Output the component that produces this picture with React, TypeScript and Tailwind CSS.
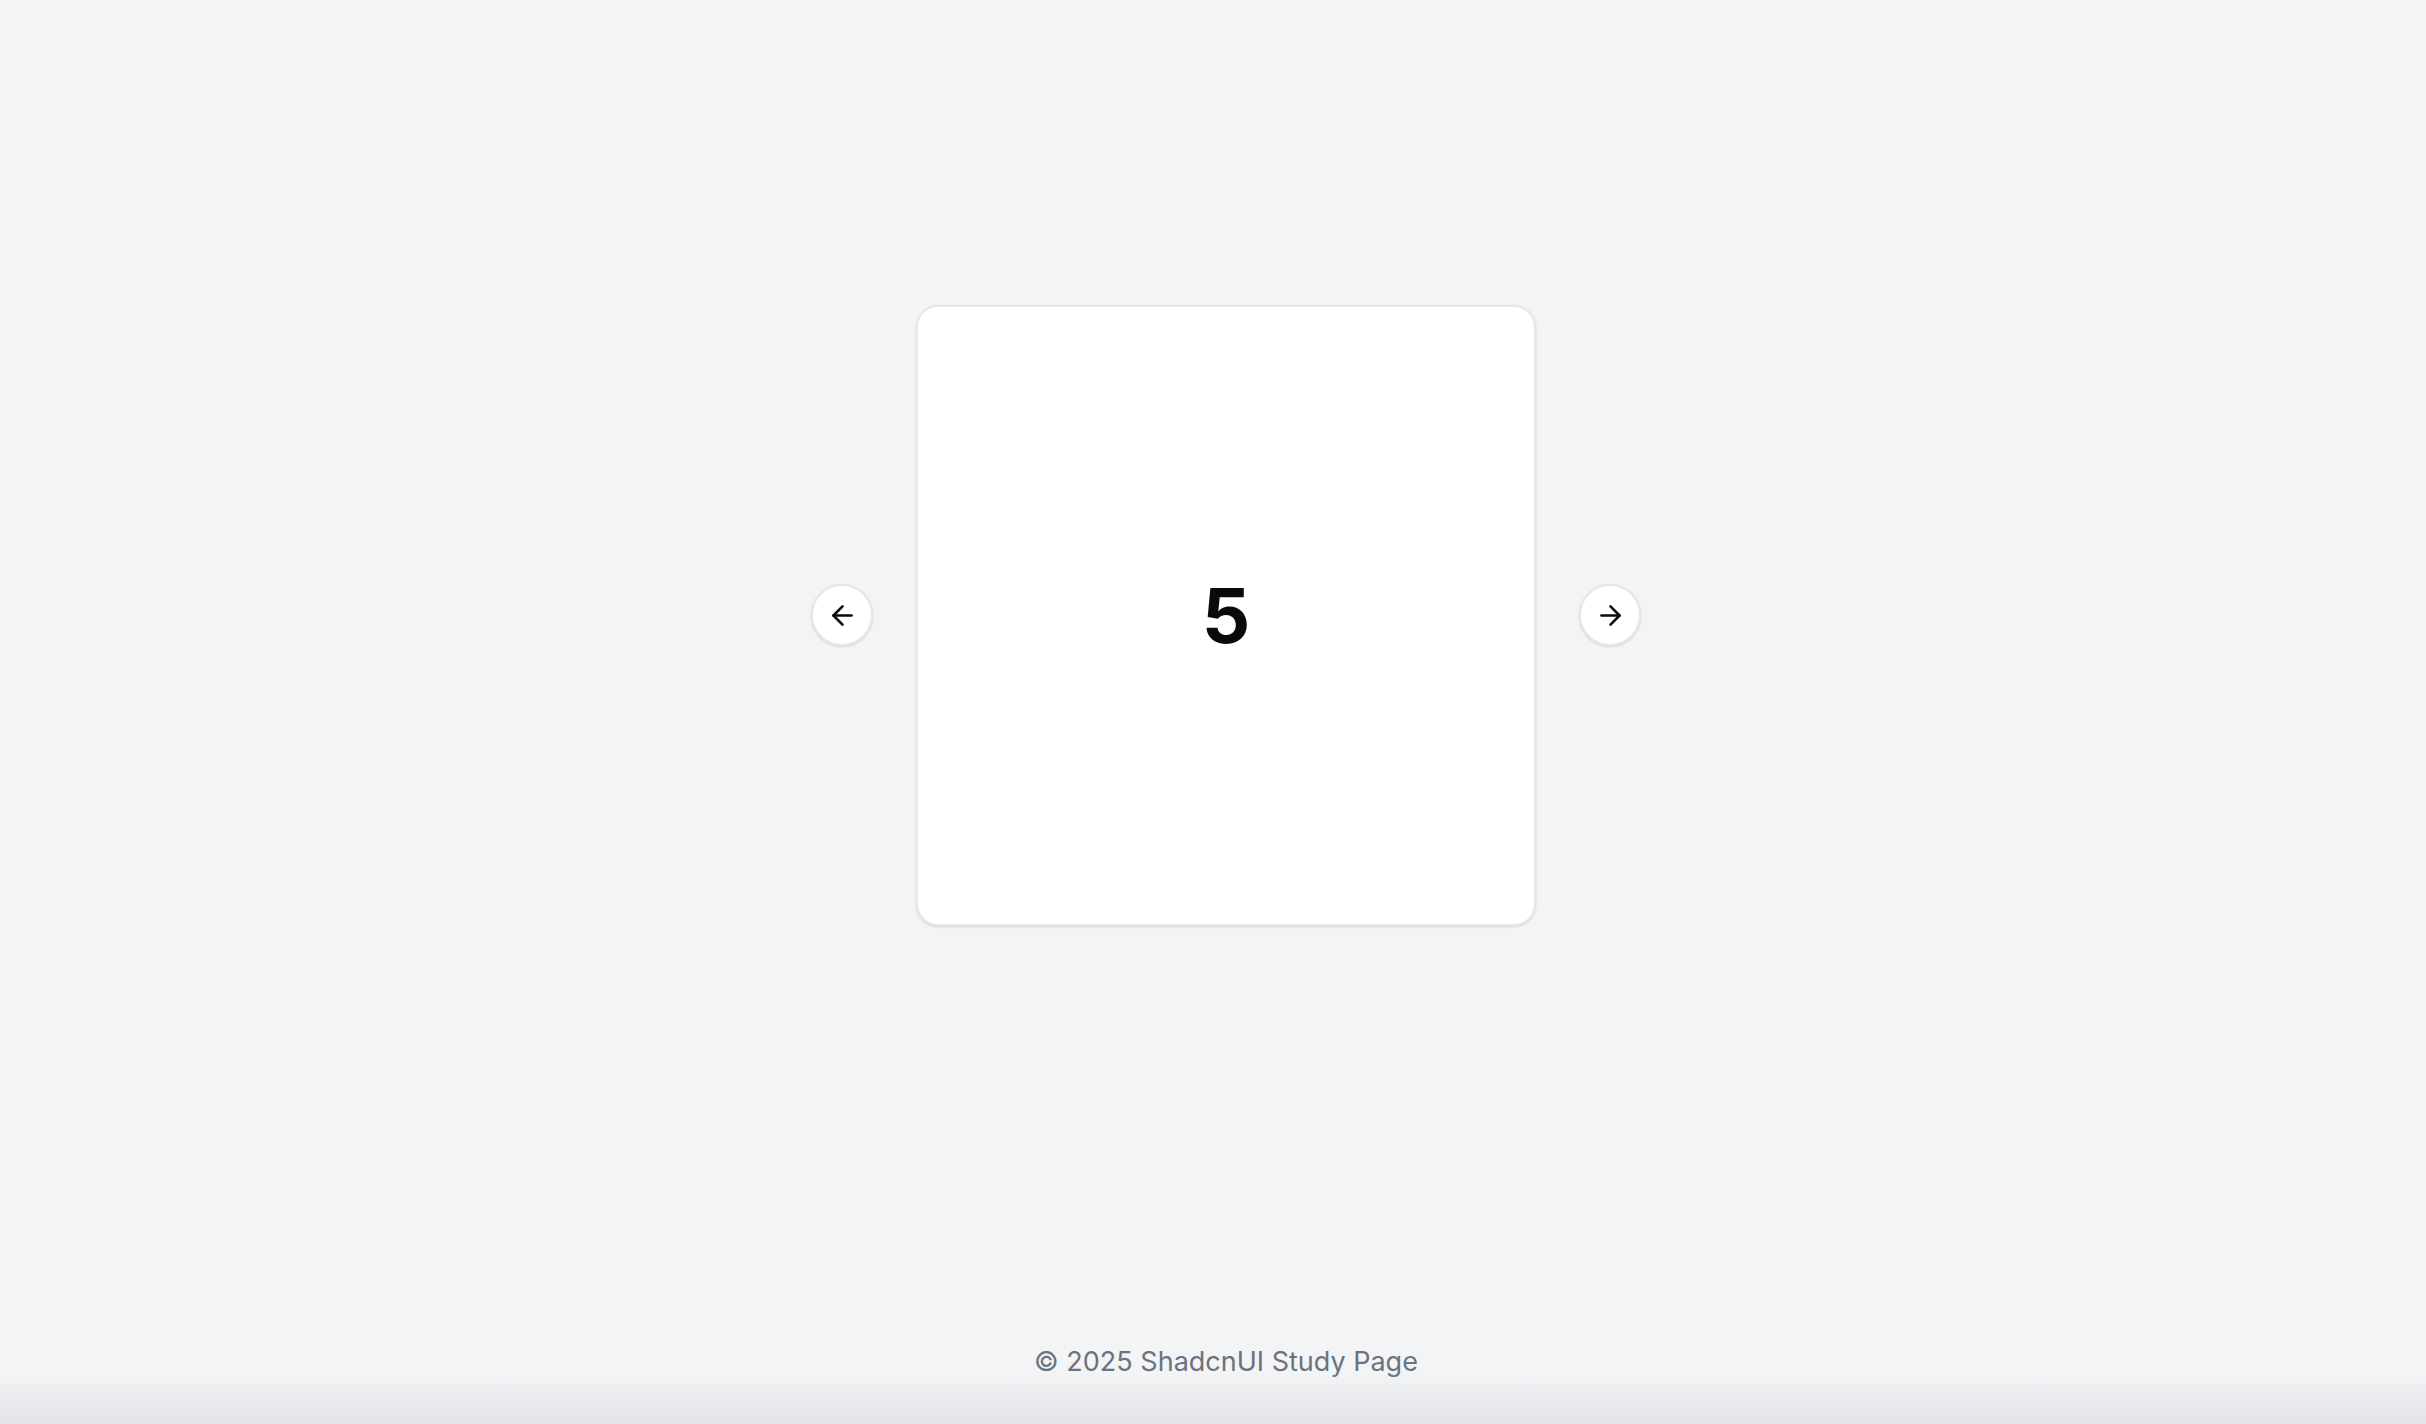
import { ArrowLeft, ArrowRight } from "lucide-react";

const font = { fontFamily: "Inter, 'Liberation Sans', sans-serif" };

function NavButton({ dir }: { dir: "prev" | "next" }) {
  const Icon = dir === "prev" ? ArrowLeft : ArrowRight;
  return (
    <button
      className="flex h-[62px] w-[62px] shrink-0 items-center justify-center rounded-full border-2 border-[#e5e7eb] bg-white text-[#0a0a0a] shadow-sm"
      aria-label={dir === "prev" ? "Previous slide" : "Next slide"}
    >
      <Icon size={31} strokeWidth={2} />
    </button>
  );
}

export default function App() {
  return (
    <div className="relative flex h-screen flex-col overflow-hidden bg-[#f3f4f6] pl-[26px]" style={font}>
      {/* Carousel */}
      <main className="flex flex-1 items-center justify-center">
        <div className="flex items-center gap-[43px]">
          <NavButton dir="prev" />
          <div className="flex h-[621px] w-[620px] items-center justify-center rounded-[22px] border-2 border-[#e5e7eb] bg-white shadow-sm">
            <span className="text-[76px] font-bold leading-none text-[#0a0a0a]">5</span>
          </div>
          <NavButton dir="next" />
        </div>
      </main>

      {/* Footer */}
      <footer className="flex h-[194px] items-end justify-center pb-[44px]">
        <p className="text-[27px] leading-[36px] text-[#6b7280]">© 2025 ShadcnUI Study Page</p>
      </footer>

      {/* Bottom fade */}
      <div className="pointer-events-none absolute inset-x-0 bottom-0 h-[52px] bg-gradient-to-b from-transparent to-[#e3e4e7]" />
    </div>
  );
}
